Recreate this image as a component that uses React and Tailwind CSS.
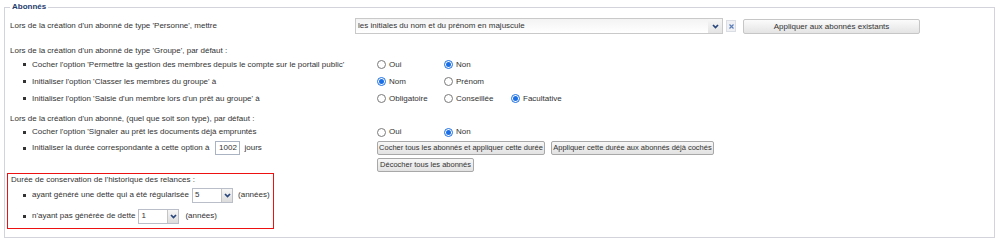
import React from "react";

function Chevron() {
  return (
    <svg width="7" height="5" viewBox="0 0 7 5">
      <path d="M1 1 L3.5 3.6 L6 1" stroke="#28467c" strokeWidth="1.7" fill="none" />
    </svg>
  );
}

function Cross() {
  return (
    <svg width="5" height="5" viewBox="0 0 5 5">
      <path d="M0.5 0.5 L4.5 4.5 M4.5 0.5 L0.5 4.5" stroke="#5d7fb8" strokeWidth="1.2" fill="none" />
    </svg>
  );
}

function Radio({ checked }) {
  return checked ? (
    <span className="w-[9px] h-[9px] rounded-full border border-[#1b6fe6] bg-white flex items-center justify-center shrink-0">
      <span className="w-[5px] h-[5px] rounded-full bg-[#1b6fe6]" />
    </span>
  ) : (
    <span className="w-[9px] h-[9px] rounded-full border border-[#7a7a7a] bg-white shrink-0" />
  );
}

function RadioGroup({ options, value }) {
  return (
    <div className="flex">
      {options.map((o) => (
        <div key={o} className="w-[67px] flex items-center">
          <Radio checked={o === value} />
          <span className="ml-[3px]">{o}</span>
        </div>
      ))}
    </div>
  );
}

function Bullet() {
  return <span className="w-[3px] h-[3px] bg-[#333] mr-[6px] shrink-0" />;
}

function BRow({ children, right }) {
  return (
    <div className="flex items-center h-[17px]">
      <div className="w-[367px] flex items-center pl-[13px]">
        <Bullet />
        <span>{children}</span>
      </div>
      {right}
    </div>
  );
}

function SmallSelect({ value }) {
  return (
    <div className="w-[41px] h-[15px] border border-[#b9bec8] bg-white flex items-stretch">
      <span className="flex-1 pl-[2px] flex items-center">{value}</span>
      <span className="w-[11px] border-l border-[#c5c5c5] bg-gradient-to-b from-[#f6f6f6] to-[#dcdcdc] flex items-center justify-center">
        <Chevron />
      </span>
    </div>
  );
}

function Btn({ children, w }) {
  return (
    <button
      className={`${w} h-[14px] border border-[#a8a8a8] rounded-[2px] bg-gradient-to-b from-[#f7f7f7] to-[#e2e2e2] text-[#333] text-[7.5px] leading-[12px] whitespace-nowrap text-center`}
    >
      {children}
    </button>
  );
}

export default function App() {
  return (
    <div className="w-[1000px] h-[241px] bg-white font-['Liberation_Sans',Arial,sans-serif] text-[8px] leading-[10px] text-[#333] pt-[2px] pl-[4px]">
      <fieldset className="w-[991px] border border-[#d3d3dc] pl-[5px] pr-[5px] pb-[8px]">
        <legend className="px-[2px] font-bold text-[#1f3c6e] leading-[10px]">Abonnés</legend>

        <div className="mt-[6px] flex items-center h-[16px]">
          <div className="w-[345px]">Lors de la création d'un abonné de type 'Personne', mettre</div>
          <div className="w-[368px] h-[16px] border border-[#c9c9c9] bg-gradient-to-b from-[#f3f3f3] to-white flex items-stretch">
            <span className="flex-1 pl-[2px] flex items-center">les initiales du nom et du prénom en majuscule</span>
            <span className="w-[14px] bg-gradient-to-b from-[#f6f6f6] to-[#e4e4e4] flex items-center justify-center">
              <Chevron />
            </span>
          </div>
          <div className="ml-[3px] w-[10px] h-[12px] flex items-center justify-center bg-[#eef0f4] border border-[#dadde4]">
            <Cross />
          </div>
          <button className="ml-[7px] w-[177px] h-[15px] border border-[#c6c6c6] rounded-[2px] bg-gradient-to-b from-[#fbfbfb] to-[#e4e4e4] text-[#333] text-[8px] leading-[13px]">
            Appliquer aux abonnés existants
          </button>
        </div>

        <div className="mt-[12px] h-[10px]">Lors de la création d'un abonné de type 'Groupe', par défaut :</div>
        <BRow right={<RadioGroup options={["Oui", "Non"]} value="Non" />}>
          Cocher l'option 'Permettre la gestion des membres depuis le compte sur le portail public'
        </BRow>
        <BRow right={<RadioGroup options={["Nom", "Prénom"]} value="Nom" />}>
          Initialiser l'option 'Classer les membres du groupe' à
        </BRow>
        <BRow right={<RadioGroup options={["Obligatoire", "Conseillée", "Facultative"]} value="Facultative" />}>
          Initialiser l'option 'Saisie d'un membre lors d'un prêt au groupe' à
        </BRow>

        <div className="mt-[7px] h-[10px]">Lors de la création d'un abonné, (quel que soit son type), par défaut :</div>
        <div className="flex items-center h-[16px]">
          <div className="w-[367px] flex items-center pl-[13px]">
            <Bullet />
            <span>Cocher l'option 'Signaler au prêt les documents déjà empruntés</span>
          </div>
          <RadioGroup options={["Oui", "Non"]} value="Non" />
        </div>
        <div className="flex items-start">
          <div className="w-[367px] h-[16px] flex items-center pl-[13px]">
            <Bullet />
            <span>Initialiser la durée correspondante à cette option à</span>
            <span className="ml-[6px] w-[25px] h-[14px] border border-[#a9b3c2] bg-white flex items-center justify-center">1002</span>
            <span className="ml-[4px]">jours</span>
          </div>
          <div className="pt-[1px] flex flex-col gap-[3px]">
            <div className="flex gap-[6px]">
              <Btn w="w-[168px]">Cocher tous les abonnés et appliquer cette durée</Btn>
              <Btn w="w-[163px]">Appliquer cette durée aux abonnés déjà cochés</Btn>
            </div>
            <div className="flex">
              <Btn w="w-[97px]">Décocher tous les abonnés</Btn>
            </div>
          </div>
        </div>

        <div className="mt-[1px] -ml-[3px] w-[267px] border border-[#ee1111] pl-[3px] pt-[1px] pb-[4px]">
          <div className="h-[10px]">Durée de conservation de l'historique des relances :</div>
          <div className="mt-[2px] h-[16px] flex items-center pl-[12px]">
            <Bullet />
            <span>ayant généré une dette qui a été régularisée</span>
            <span className="ml-[3px]"><SmallSelect value="5" /></span>
            <span className="ml-[5px]">(années)</span>
          </div>
          <div className="mt-[5px] h-[16px] flex items-center pl-[12px]">
            <Bullet />
            <span>n'ayant pas générée de dette</span>
            <span className="ml-[3px]"><SmallSelect value="1" /></span>
            <span className="ml-[6px]">(années)</span>
          </div>
        </div>
      </fieldset>
    </div>
  );
}
